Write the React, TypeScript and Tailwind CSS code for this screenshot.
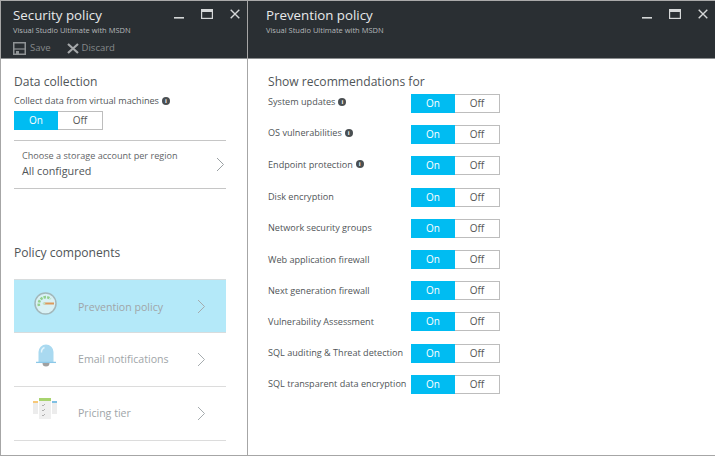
import React from "react";

const font = { fontFamily: '"Open Sans", "Noto Sans", sans-serif' };

function Info() {
  return (
    <span className="inline-flex w-[8px] h-[8px] rounded-full bg-[#4a4f52] items-center justify-center text-white text-[6px] font-bold leading-none shrink-0">i</span>
  );
}

function Toggle() {
  return (
    <div className="flex w-[89px] h-[19px] border border-[#bdbdbd] bg-white text-[10px] shrink-0">
      <div className="w-[44px] -my-px -ml-px h-[19px] bg-[#00bcf2] text-white flex items-center justify-center">On</div>
      <div className="flex-1 flex items-center justify-center text-[#555]">Off</div>
    </div>
  );
}

function Chevron({ color = "#9aa0a3" }: { color?: string }) {
  return (
    <svg width="9" height="15" viewBox="0 0 9 15" fill="none" stroke={color} strokeWidth="1">
      <path d="M1 1l6.5 6.5L1 14" />
    </svg>
  );
}

function WindowButtons() {
  return (
    <div className="flex items-start gap-[17px]">
      <svg width="10" height="10" viewBox="0 0 10 10" className="mt-[8px]"><rect x="0" y="0" width="10" height="1.6" fill="#d5d7d8" /></svg>
      <svg width="12" height="10" viewBox="0 0 12 10"><rect x="0.6" y="0.6" width="10.8" height="8.8" fill="none" stroke="#d5d7d8" strokeWidth="1.2" /><rect x="1" y="1" width="10" height="2" fill="#d5d7d8" /></svg>
      <svg width="10" height="10" viewBox="0 0 10 10" stroke="#d5d7d8" strokeWidth="1.4"><path d="M0.7 0.7l8.6 8.6M9.3 0.7L0.7 9.3" /></svg>
    </div>
  );
}

function Gauge() {
  return (
    <svg width="23" height="23" viewBox="0 0 23 23">
      <circle cx="11.5" cy="11.5" r="10.5" fill="#d9f1f5" stroke="#a3b8bb" strokeWidth="1.5" />
      <path d="M5 14a7 7 0 0 1 11.5-7" fill="none" stroke="#93d08e" strokeWidth="2.6" strokeDasharray="2.4 1.1" />
      <rect x="10" y="10.5" width="10" height="2" fill="#dd9a5c" />
      <circle cx="10" cy="11.5" r="1.3" fill="#bfe0c4" />
    </svg>
  );
}

function Bell() {
  return (
    <svg width="20" height="24" viewBox="0 0 20 24">
      <path d="M2.5 19V9a7.5 7.5 0 0 1 15 0v10z" fill="#a9d9f0" />
      <path d="M0 19.4h20" stroke="#8cc8e8" strokeWidth="1.3" />
      <path d="M6.5 20h7a3.5 3.5 0 0 1-7 0z" fill="#a0a0a0" />
      <path d="M5.5 9.5a5 5 0 0 1 3-5" fill="none" stroke="#e4f5fc" strokeWidth="1.4" />
    </svg>
  );
}

function Pricing() {
  return (
    <svg width="24" height="22" viewBox="0 0 24 22">
      <rect x="0" y="4" width="5" height="13" fill="#ececec" />
      <rect x="0" y="4" width="5" height="2" fill="#f6c878" />
      <rect x="19" y="4" width="5" height="13" fill="#ececec" />
      <rect x="19" y="4" width="5" height="2" fill="#7fc0e4" />
      <rect x="6" y="1" width="12" height="21" fill="#efefef" />
      <rect x="6" y="1" width="12" height="3" fill="#a8d46f" />
      <path d="M9 8l1 1 2-2M9 13l1 1 2-2M9 18l1 1 2-2" fill="none" stroke="#a0a0a0" strokeWidth="0.8" />
    </svg>
  );
}

function PolicyRow({ icon, label, active, iconClass }: { icon: React.ReactNode; label: string; active?: boolean; iconClass: string }) {
  return (
    <div className={`flex items-center h-[54px] border-b ${active ? "bg-[#b4e9f9] border-[#d8dcdd] border-t -mt-px" : "border-[#dcdcdc]"}`}>
      <div className={`w-[64px] h-full shrink-0 ${iconClass}`}>{icon}</div>
      <span className={`text-[10.6px] text-[#a0a5a8] w-[119px] shrink-0 ${active ? "mt-[3px]" : "mt-[1px]"}`}>{label}</span>
      <Chevron color="#a5abae" />
    </div>
  );
}

const rows: [string, boolean][] = [
  ["System updates", true],
  ["OS vulnerabilities", true],
  ["Endpoint protection", true],
  ["Disk encryption", false],
  ["Network security groups", false],
  ["Web application firewall", false],
  ["Next generation firewall", false],
  ["Vulnerability Assessment", false],
  ["SQL auditing & Threat detection", false],
  ["SQL transparent data encryption", false],
];

export default function App() {
  return (
    <div className="w-[715px] h-[456px] flex bg-white overflow-hidden border-b border-l border-[#a6a6a6]" style={font}>
      <div className="w-[247px] h-full shrink-0 flex flex-col border-r border-[#a6a6a6]">
        <div className="h-[59px] bg-[#2a2f33] border-b border-[#8a8d8f] border-t border-t-[#aaa] pl-[12px] pr-[7px] shrink-0">
          <div className="flex justify-between items-start">
            <div className="text-[13.3px] leading-[18px] mt-[5px] text-[#e8e9ea]">Security policy</div>
            <div className="mt-[8px]"><WindowButtons /></div>
          </div>
          <div className="text-[7.5px] leading-[9px] -mt-px text-[#b4b7b9]">Visual Studio Ultimate with MSDN</div>
          <div className="flex items-center mt-[6px] text-[9.5px] text-[#85898b]">
            <svg width="13" height="13" viewBox="0 0 13 13" className="mr-[4px]"><path d="M0.75 0.75h11.5v11.5H0.75z" fill="none" stroke="#8f9395" strokeWidth="1.5" /><path d="M1 7h11" stroke="#8f9395" strokeWidth="1.2" /><rect x="3" y="9" width="3" height="4" fill="#8f9395" /></svg>
            <span className="mr-[16px]">Save</span>
            <svg width="12" height="11" viewBox="0 0 12 11" stroke="#a5a8aa" strokeWidth="2.2" className="mr-[3px]"><path d="M1 1l10 9M11 1L1 10" /></svg>
            <span>Discard</span>
          </div>
        </div>
        <div className="pl-[13px] pr-[21px] flex-1">
          <div className="text-[12.1px] leading-[18px] text-[#505558] mt-[14px]">Data collection</div>
          <div className="flex items-center gap-[3px] text-[9.1px] leading-[14px] text-[#505558] mt-[3px] mb-[3px]">Collect data from virtual machines <Info /></div>
          <Toggle />
          <div className="mt-[10px] h-[49px] border-y border-[#c6c6c6] flex items-center justify-between pl-[8px] pr-[1px]">
            <div className="pb-[3px]">
              <div className="text-[9.1px] leading-[14px] text-[#5f6467]">Choose a storage account per region</div>
              <div className="text-[10.8px] leading-[15px] text-[#505558]">All configured</div>
            </div>
            <Chevron />
          </div>
          <div className="text-[12.1px] leading-[18px] text-[#505558] mt-[55px] mb-[18px]">Policy components</div>
          <PolicyRow icon={<Gauge />} label="Prevention policy" active iconClass="pl-[20px] pt-[12px]" />
          <PolicyRow icon={<Bell />} label="Email notifications" iconClass="pl-[22px] pt-[10px]" />
          <PolicyRow icon={<Pricing />} label="Pricing tier" iconClass="pl-[19px] pt-[10px]" />
        </div>
      </div>
      <div className="flex-1 flex flex-col min-w-0">
        <div className="h-[59px] bg-[#2a2f33] border-b border-[#8a8d8f] border-t border-t-[#aaa] pl-[18px] pr-[7px] shrink-0">
          <div className="flex justify-between items-start">
            <div className="text-[13.3px] leading-[18px] mt-[5px] text-[#e8e9ea]">Prevention policy</div>
            <div className="mt-[8px]"><WindowButtons /></div>
          </div>
          <div className="text-[7.5px] leading-[9px] -mt-px text-[#b4b7b9]">Visual Studio Ultimate with MSDN</div>
        </div>
        <div className="pl-[20px]">
          <div className="text-[12.1px] leading-[18px] text-[#505558] mt-[14px] mb-[3px]">Show recommendations for</div>
          <div className="flex flex-col gap-[12.2px]">
            {rows.map(([label, info]) => (
              <div key={label} className="flex items-center h-[19px]">
                <div className={`w-[143px] shrink-0 flex items-center gap-[3px] text-[9.1px] text-[#505558] whitespace-nowrap ${info ? "-mt-[3px]" : "mt-0"}`}>
                  {label}
                  {info && <Info />}
                </div>
                <Toggle />
              </div>
            ))}
          </div>
        </div>
      </div>
    </div>
  );
}
